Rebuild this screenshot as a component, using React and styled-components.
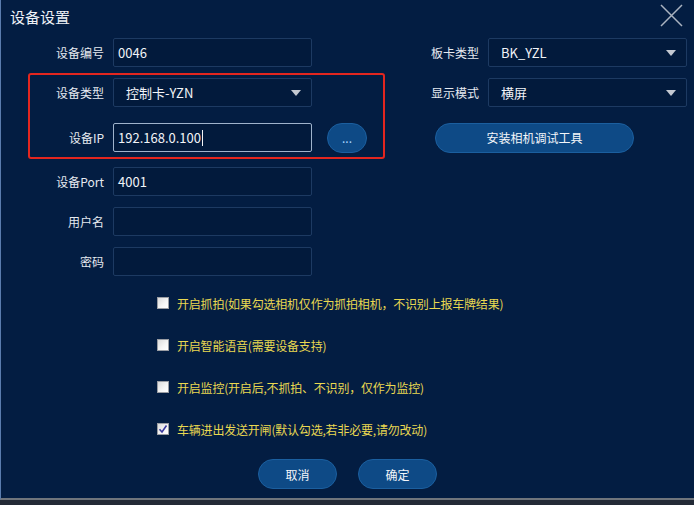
import React from 'react';
import styled, { createGlobalStyle } from 'styled-components';

const Global = createGlobalStyle`
  html, body {
    margin: 0;
    padding: 0;
    background: #232a36;
  }
  * { box-sizing: border-box; }
`;

const Window = styled.div`
  width: 694px;
  height: 500px;
  background: #031d42;
  border-left: 1px solid #5a7cae;
  border-bottom: 2px solid #70757c;
  font-family: "Noto Sans CJK SC", "Microsoft YaHei", sans-serif;
  color: #e8ecf2;
  display: flex;
  flex-direction: column;
`;

const TitleBar = styled.div`
  height: 38px;
  display: flex;
  align-items: flex-start;
  justify-content: space-between;
  padding: 4px 10px 0 9px;
`;

const Title = styled.div`
  font-size: 15px;
  line-height: 26px;
  color: #eef1f6;
`;

const CloseButton = styled.button`
  width: 24px;
  height: 24px;
  padding: 0;
  border: none;
  background: transparent;
  cursor: pointer;
  display: flex;
`;

const Form = styled.div`
  position: relative;
  display: flex;
  flex-direction: column;
`;

const Row = styled.div`
  display: grid;
  grid-template-columns: 103px 199px 1fr 48px 199px;
  column-gap: 9px;
  width: 686px;
  height: ${p => p.$h || 29}px;
  margin-top: ${p => p.$mt || 0}px;
  align-items: center;
`;

const Label = styled.label`
  font-size: 12px;
  color: #e6eaf0;
  text-align: right;
  white-space: nowrap;
`;

const TextBox = styled.div`
  height: 29px;
  background: #021a3c;
  border: 1px solid ${p => (p.$focus ? '#9fb3cc' : '#1d3a62')};
  border-radius: 2px;
  font-size: 13px;
  color: #f2f4f8;
  display: flex;
  align-items: center;
  padding-left: 4px;
`;

const Caret = styled.span`
  display: inline-block;
  width: 1px;
  height: 16px;
  background: #f2f4f8;
  margin-left: 1px;
`;

const Select = styled(TextBox)`
  justify-content: space-between;
  padding: 0 10px 0 12px;
`;

const Arrow = styled.span`
  width: 0;
  height: 0;
  border-left: 5px solid transparent;
  border-right: 5px solid transparent;
  border-top: 6px solid #c4c9d2;
`;

const PillButton = styled.button`
  height: 30px;
  width: ${p => p.$w}px;
  margin-left: ${p => p.$ml || 0}px;
  background: #0e4a86;
  border: 1px solid #1b5f9f;
  border-radius: 15px;
  color: ${p => (p.$light ? '#a8d6ff' : '#f4f6fa')};
  font-family: inherit;
  font-size: 12px;
  cursor: pointer;
  padding: 0;
`;

const InstallCell = styled.div`
  grid-column: 4 / 6;
  display: flex;
`;

const Highlight = styled.div`
  position: absolute;
  left: 27px;
  top: 35px;
  width: 357px;
  height: 86px;
  border: 2px solid #e3261f;
  border-radius: 3px;
  pointer-events: none;
`;

const Options = styled.div`
  display: flex;
  flex-direction: column;
  gap: 22px;
  margin-top: 17px;
  padding-left: 156px;
`;

const Option = styled.label`
  display: flex;
  align-items: center;
  height: 20px;
  gap: 8px;
  font-size: 12px;
  letter-spacing: -0.2px;
  color: #e9d851;
  white-space: nowrap;
`;

const Box = styled.span`
  width: 12px;
  height: 12px;
  border: 1px solid #9a9da3;
  background: linear-gradient(135deg, #dcdcdc, #f6f6f6 60%, #ffffff);
  display: flex;
  align-items: center;
  justify-content: center;
`;

const Footer = styled.div`
  display: flex;
  justify-content: center;
  gap: 21px;
  margin-top: 20px;
`;

const fields = [
  { label: '设备编号', value: '0046', mt: 0, right: { label: '板卡类型', value: 'BK_YZL' } },
  { label: '设备类型', value: '控制卡-YZN', mt: 11, select: true, right: { label: '显示模式', value: '横屏' } },
];

const options = [
  { text: '开启抓拍(如果勾选相机仅作为抓拍相机，不识别上报车牌结果)', checked: false },
  { text: '开启智能语音(需要设备支持)', checked: false },
  { text: '开启监控(开启后,不抓拍、不识别，仅作为监控)', checked: false },
  { text: '车辆进出发送开闸(默认勾选,若非必要,请勿改动)', checked: true },
];

const Check = ({ checked }) => (
  <Box>
    {checked && (
      <svg width="10" height="10" viewBox="0 0 10 10">
        <path d="M1.5 5.2 L4 8 L8.5 1.5" fill="none" stroke="#3b3a9e" strokeWidth="1.6" />
      </svg>
    )}
  </Box>
);

export default function App() {
  return (
    <>
      <Global />
      <Window>
        <TitleBar>
          <Title>设备设置</Title>
          <CloseButton aria-label="close">
            <svg width="23" height="23" viewBox="0 0 23 23">
              <path d="M1 1 L22 22 M22 1 L1 22" stroke="#aab3c0" strokeWidth="1.5" />
            </svg>
          </CloseButton>
        </TitleBar>

        <Form>
          {fields.map(f => (
            <Row key={f.label} $mt={f.mt}>
              <Label>{f.label}</Label>
              {f.select ? (
                <Select>{f.value}<Arrow /></Select>
              ) : (
                <TextBox>{f.value}</TextBox>
              )}
              <span />
              <Label>{f.right.label}</Label>
              <Select>{f.right.value}<Arrow /></Select>
            </Row>
          ))}

          <Row $mt={15} $h={31}>
            <Label>设备IP</Label>
            <TextBox $focus>192.168.0.100<Caret /></TextBox>
            <div><PillButton $w={40} $ml={6} $light>...</PillButton></div>
            <InstallCell><PillButton $w={199} $ml={4}>安装相机调试工具</PillButton></InstallCell>
          </Row>

          <Row $mt={14}>
            <Label>设备Port</Label>
            <TextBox>4001</TextBox>
          </Row>
          <Row $mt={11}>
            <Label>用户名</Label>
            <TextBox />
          </Row>
          <Row $mt={11}>
            <Label>密码</Label>
            <TextBox />
          </Row>

          <Highlight />
        </Form>

        <Options>
          {options.map(o => (
            <Option key={o.text}>
              <Check checked={o.checked} />
              {o.text}
            </Option>
          ))}
        </Options>

        <Footer>
          <PillButton $w={79}>取消</PillButton>
          <PillButton $w={79}>确定</PillButton>
        </Footer>
      </Window>
    </>
  );
}
